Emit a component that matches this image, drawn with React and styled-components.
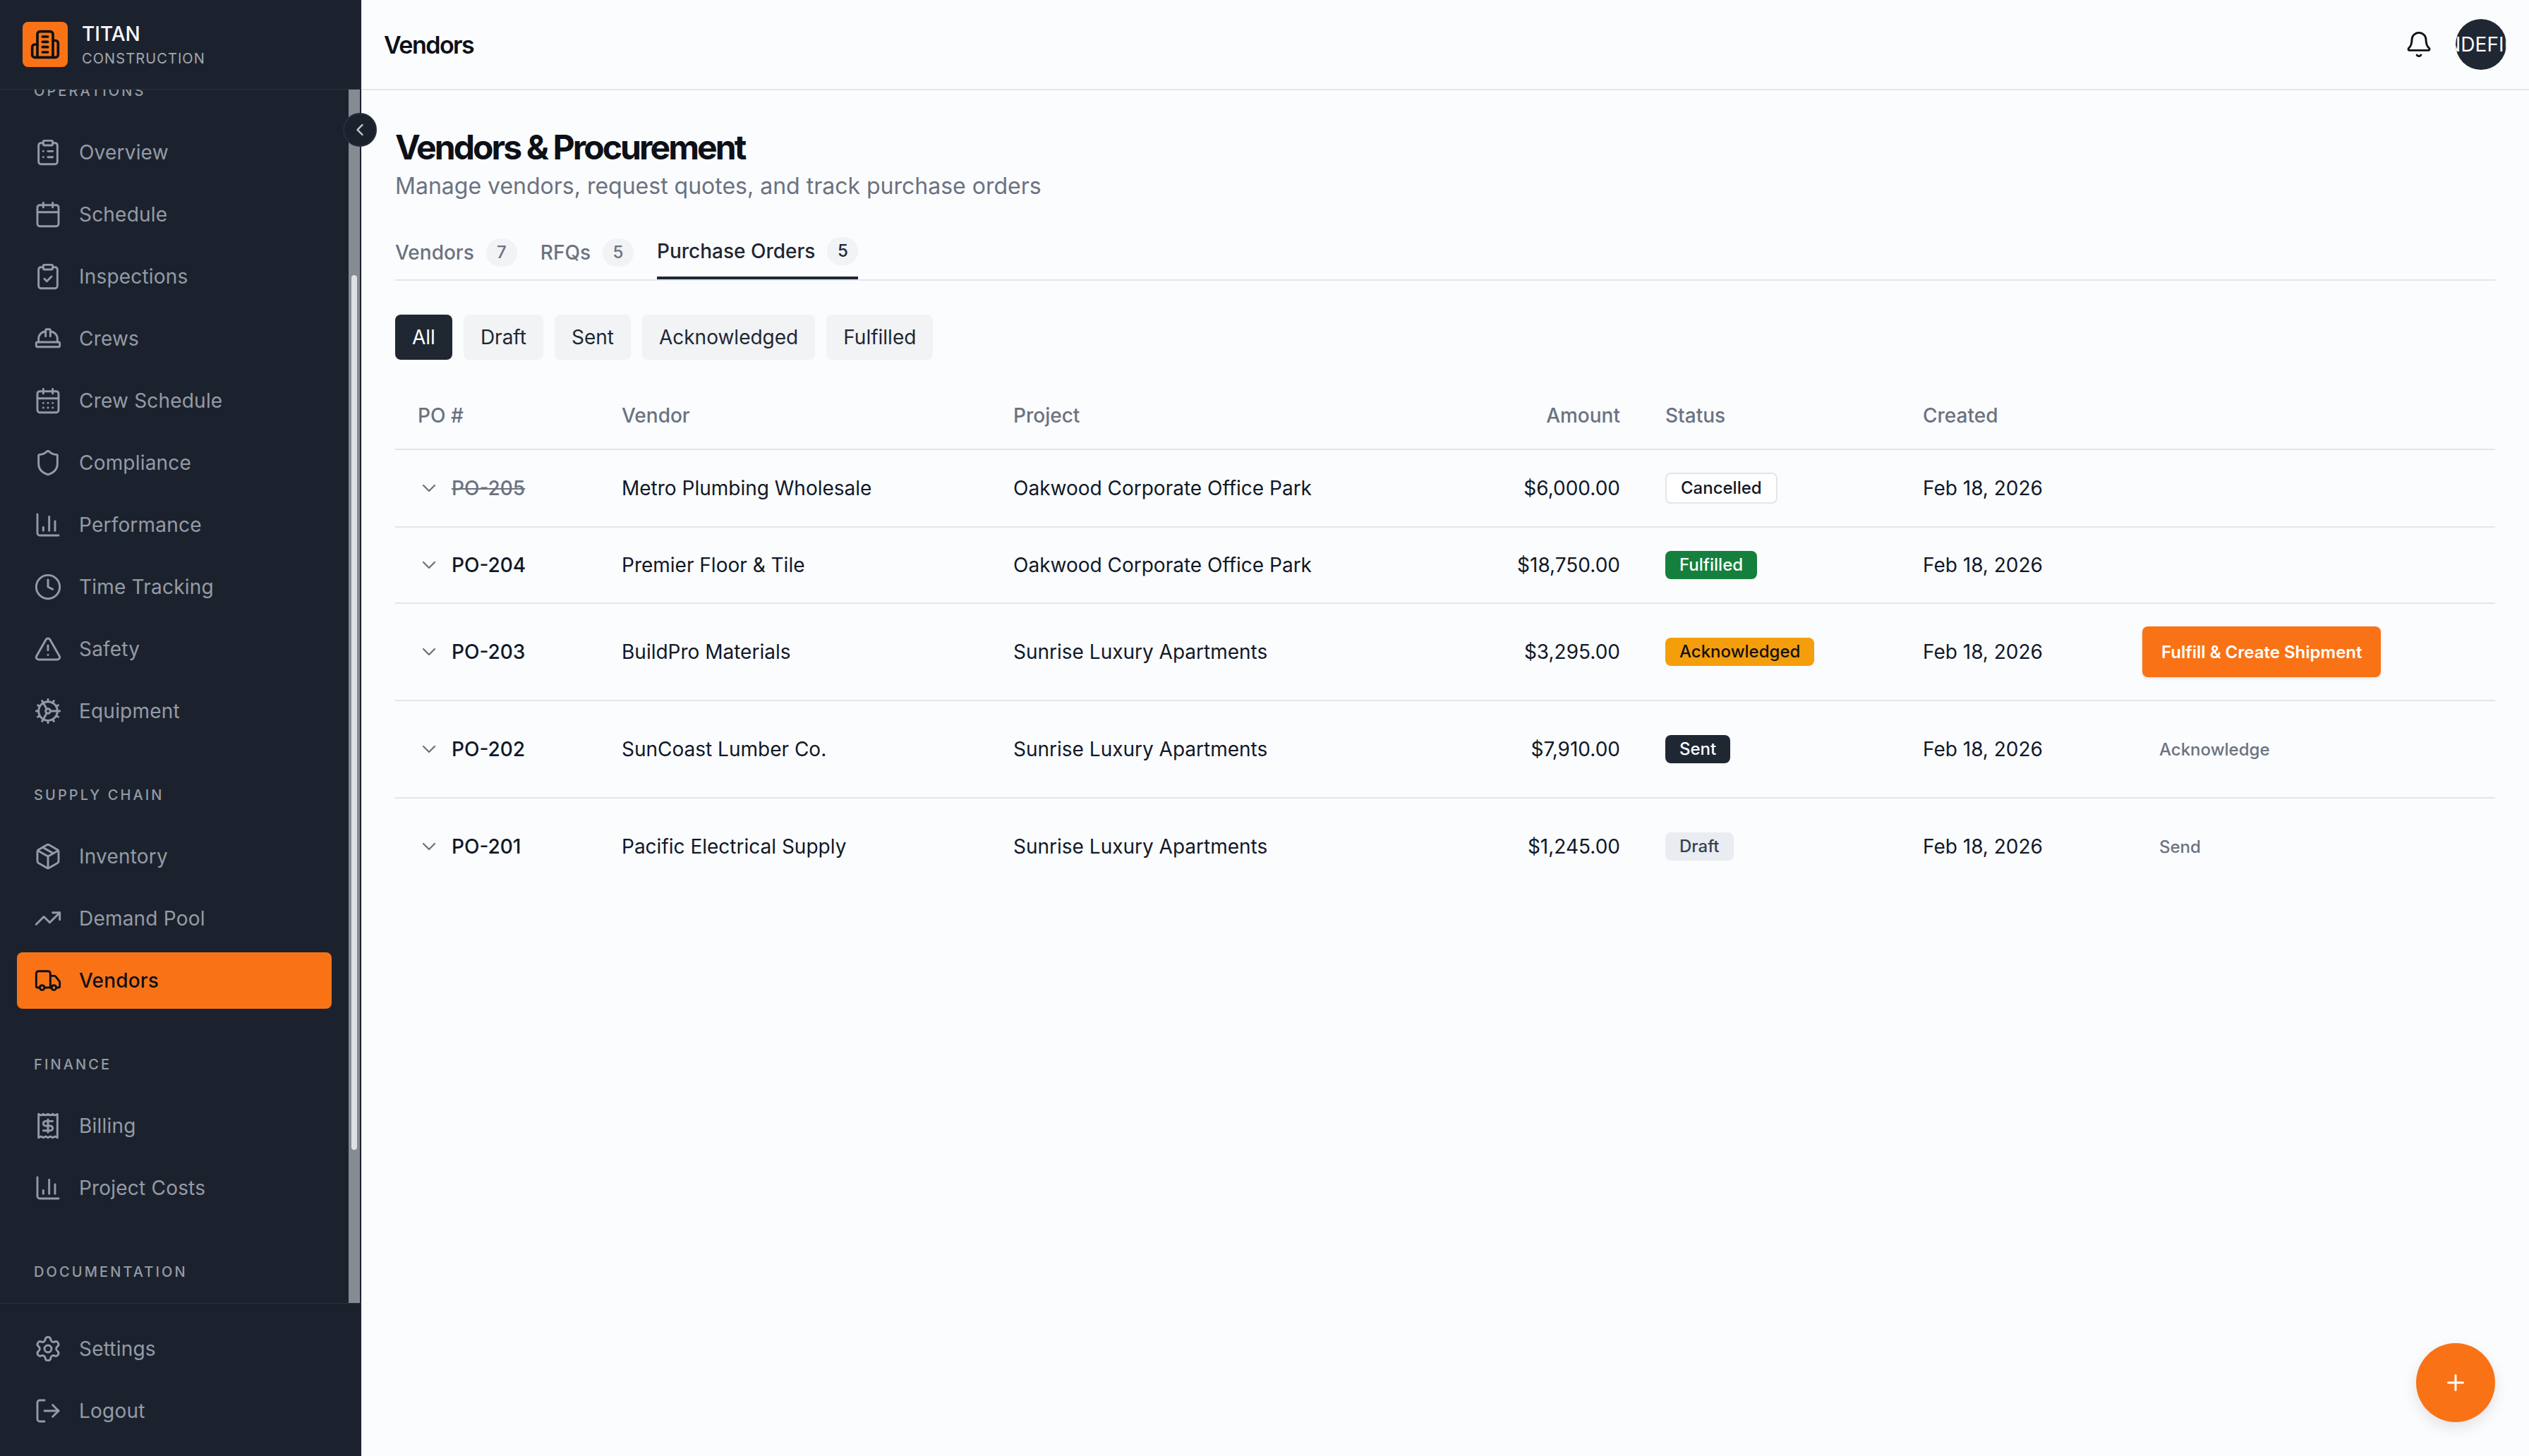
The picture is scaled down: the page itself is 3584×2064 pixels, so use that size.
import styled, { createGlobalStyle } from "styled-components";
import {
  Bell, Calendar, CalendarDays, ChartColumn, ChevronDown, ChevronLeft, ClipboardCheck, ClipboardList,
  Clock, Cog, HardHat, LogOut, Package, Plus, Receipt, Settings, Shield, TrendingUp, TriangleAlert, Truck,
} from "lucide-react";

const ORANGE = "#f97316";
const NAVY = "#1c222d";
const LINE = "#e2e6ea";

const NAV = [
  {
    title: "OPERATIONS",
    items: [
      ["Overview", ClipboardList], ["Schedule", Calendar], ["Inspections", ClipboardCheck], ["Crews", HardHat],
      ["Crew Schedule", CalendarDays], ["Compliance", Shield], ["Performance", ChartColumn],
      ["Time Tracking", Clock], ["Safety", TriangleAlert], ["Equipment", Cog],
    ],
  },
  { title: "SUPPLY CHAIN", items: [["Inventory", Package], ["Demand Pool", TrendingUp], ["Vendors", Truck]] },
  { title: "FINANCE", items: [["Billing", Receipt], ["Project Costs", ChartColumn]] },
  { title: "DOCUMENTATION", items: [] },
];

const TABS = [["Vendors", 7], ["RFQs", 5], ["Purchase Orders", 5]];
const FILTERS = ["All", "Draft", "Sent", "Acknowledged", "Fulfilled"];
const COLUMNS = [289, 555, 620, 304, 365, 311, 532];

const ORDERS = [
  { id: "PO-205", vendor: "Metro Plumbing Wholesale", project: "Oakwood Corporate Office Park", amount: "$6,000.00", status: "Cancelled" },
  { id: "PO-204", vendor: "Premier Floor & Tile", project: "Oakwood Corporate Office Park", amount: "$18,750.00", status: "Fulfilled" },
  { id: "PO-203", vendor: "BuildPro Materials", project: "Sunrise Luxury Apartments", amount: "$3,295.00", status: "Acknowledged", primary: "Fulfill & Create Shipment" },
  { id: "PO-202", vendor: "SunCoast Lumber Co.", project: "Sunrise Luxury Apartments", amount: "$7,910.00", status: "Sent", ghost: "Acknowledge" },
  { id: "PO-201", vendor: "Pacific Electrical Supply", project: "Sunrise Luxury Apartments", amount: "$1,245.00", status: "Draft", ghost: "Send" },
];

const BADGE = {
  Cancelled: "background:#fff;color:#111827;border:2px solid #e2e6ea;height:44px;",
  Fulfilled: "background:#15803d;color:#fff;",
  Acknowledged: "background:#f59e0b;color:#111;",
  Sent: "background:#1f2733;color:#fff;",
  Draft: "background:#e9ecf0;color:#374151;",
};

const Global = createGlobalStyle`
  html, body { margin: 0; padding: 0; height: 100%; }
  body {
    font-family: Inter, "Liberation Sans", sans-serif;
    background: #fafcfe;
    color: #111827;
    overflow: hidden;
  }
  button { font-family: inherit; }
`;

const Shell = styled.div`
  display: flex;
  height: 100vh;
`;

const Sidebar = styled.aside`
  position: relative;
  z-index: 2;
  flex: 0 0 512px;
  display: flex;
  flex-direction: column;
  background: ${NAVY};
`;

const Brand = styled.div`
  flex: 0 0 127px;
  box-sizing: border-box;
  display: flex;
  align-items: center;
  gap: 20px;
  padding-left: 32px;
  border-bottom: 1px solid #2c323d;
`;

const LogoBox = styled.div`
  width: 64px;
  height: 64px;
  border-radius: 8px;
  background: ${ORANGE};
  color: #0d1017;
  display: flex;
  align-items: center;
  justify-content: center;
`;

const BrandText = styled.div`
  display: flex;
  flex-direction: column;
  gap: 6px;
`;

const BrandName = styled.div`
  font-size: 28px;
  line-height: 34px;
  font-weight: 500;
  color: #f8fafc;
`;

const BrandSub = styled.div`
  font-size: 20px;
  line-height: 24px;
  letter-spacing: 1.1px;
  color: #a2a8b2;
`;

const NavScroll = styled.div`
  position: relative;
  flex: 1;
  min-height: 0;
  overflow: hidden;
`;

const NavInner = styled.nav`
  margin-top: -18px;
  padding: 0 42px 0 24px;
`;

const Section = styled.section`
  & + & { margin-top: 59px; }
`;

const SectionTitle = styled.div`
  height: 40px;
  line-height: 40px;
  margin-bottom: 27px;
  padding-left: 24px;
  font-size: 20px;
  font-weight: 500;
  letter-spacing: 3.1px;
  color: #949ba7;
`;

const NavList = styled.div`
  display: flex;
  flex-direction: column;
  gap: 8px;
`;

const NavItem = styled.a`
  display: flex;
  align-items: center;
  gap: 24px;
  height: 80px;
  width: 446px;
  box-sizing: border-box;
  padding-left: 24px;
  border-radius: 8px;
  font-size: 28px;
  letter-spacing: 0.2px;
  font-weight: ${(p) => (p.$active ? 500 : 400)};
  background: ${(p) => (p.$active ? ORANGE : "transparent")};
  color: ${(p) => (p.$active ? "#0d1017" : "#949ba7")};
`;

const Track = styled.div`
  position: absolute;
  top: 0;
  bottom: 0;
  left: 494px;
  width: 16px;
  background: #868b93;
`;

const Thumb = styled.div`
  position: absolute;
  top: 263px;
  left: 4px;
  width: 8px;
  height: 1240px;
  border-radius: 4px;
  background: #dde1e6;
`;

const Footer = styled.div`
  flex: 0 0 auto;
  display: flex;
  flex-direction: column;
  gap: 8px;
  padding: 24px;
  border-top: 1px solid #2c323d;
`;

const Collapse = styled.button`
  position: absolute;
  top: 160px;
  left: 486px;
  width: 48px;
  height: 48px;
  padding: 0;
  border-radius: 50%;
  border: 2px solid #262d39;
  background: ${NAVY};
  color: #c6cbd3;
  display: flex;
  align-items: center;
  justify-content: center;
`;

const Main = styled.main`
  flex: 1;
  min-width: 0;
  display: flex;
  flex-direction: column;
`;

const TopBar = styled.header`
  flex: 0 0 128px;
  box-sizing: border-box;
  display: flex;
  align-items: center;
  justify-content: space-between;
  padding: 0 32px;
  border-bottom: 2px solid ${LINE};
`;

const TopTitle = styled.div`
  font-size: 34px;
  font-weight: 600;
  letter-spacing: -1.5px;
  color: #0d1017;
`;

const TopRight = styled.div`
  display: flex;
  align-items: center;
  gap: 32px;
  color: #0d1017;
`;

const Avatar = styled.div`
  width: 72px;
  height: 72px;
  box-sizing: border-box;
  padding-left: 20px;
  border-radius: 50%;
  overflow: hidden;
  background: #1f2733;
  color: #fff;
  font-size: 28px;
  display: flex;
  align-items: center;
  justify-content: center;
  white-space: nowrap;
`;

const Content = styled.div`
  padding: 48px;
`;

const Title = styled.h1`
  margin: 0;
  padding-top: 2px;
  font-size: 48px;
  line-height: 62px;
  font-weight: 700;
  letter-spacing: -2.9px;
  color: #0d1017;
`;

const Subtitle = styled.p`
  margin: 0;
  font-size: 32px;
  line-height: 48px;
  color: #6b7280;
`;

const TabBar = styled.div`
  display: flex;
  align-items: flex-end;
  gap: 33px;
  margin-top: 48px;
  border-bottom: 2px solid ${LINE};
`;

const Tab = styled.div`
  display: flex;
  align-items: center;
  gap: 17px;
  padding-bottom: 16px;
  font-size: 28px;
  line-height: 40px;
  font-weight: 500;
  color: ${(p) => (p.$active ? "#1f2733" : "#6b7280")};
  border-bottom: ${(p) => (p.$active ? "4px solid #1f2733" : "2px solid transparent")};
`;

const Count = styled.span`
  width: 44px;
  height: 40px;
  border-radius: 20px;
  background: #f1f3f5;
  font-size: 24px;
  display: flex;
  align-items: center;
  justify-content: center;
`;

const Filters = styled.div`
  display: flex;
  gap: 16px;
  margin: 48px 0 32px;
`;

const Filter = styled.button`
  height: 64px;
  padding: 0 24px;
  border: 0;
  border-radius: 8px;
  font-size: 28px;
  font-weight: 400;
  background: ${(p) => (p.$active ? "#1f2733" : "#f1f3f5")};
  color: ${(p) => (p.$active ? "#fff" : "#1f2733")};
`;

const Table = styled.table`
  width: 100%;
  table-layout: fixed;
  border-collapse: collapse;
  font-size: 28px;
  line-height: 42px;
`;

const Th = styled.th`
  height: 94px;
  padding: 0 32px;
  text-align: ${(p) => (p.$right ? "right" : "left")};
  font-weight: 500;
  color: #6b7280;
  border-bottom: 2px solid ${LINE};
`;

const Tr = styled.tr`
  border-bottom: 2px solid ${LINE};
  &:last-child { border-bottom: 0; }
`;

const Td = styled.td`
  padding: 32px;
  text-align: ${(p) => (p.$right ? "right" : "left")};
  vertical-align: middle;
  white-space: nowrap;
`;

const PoCell = styled.div`
  display: flex;
  align-items: center;
  gap: 16px;
  font-weight: 500;
  color: ${(p) => (p.$cancelled ? "#6b7280" : "#111827")};
  text-decoration: ${(p) => (p.$cancelled ? "line-through" : "none")};
  svg { color: #6b7280; flex: none; }
`;

const Badge = styled.span`
  display: flex;
  width: fit-content;
  align-items: center;
  box-sizing: border-box;
  height: 40px;
  padding: 0 20px;
  border-radius: 8px;
  font-size: 24px;
  font-weight: 500;
  line-height: 32px;
  ${(p) => BADGE[p.$status]}
`;

const ActionButton = styled.button`
  display: block;
  height: 72px;
  padding: 0 ${(p) => (p.$primary ? "27px" : "24px")};
  border: 0;
  border-radius: 8px;
  font-size: 24px;
  font-weight: ${(p) => (p.$primary ? 600 : 500)};
  background: ${(p) => (p.$primary ? ORANGE : "transparent")};
  color: ${(p) => (p.$primary ? "#fff" : "#6b7280")};
  box-shadow: ${(p) => (p.$primary ? "0 2px 4px rgba(0,0,0,.1)" : "none")};
`;

const Fab = styled.button`
  position: fixed;
  right: 48px;
  bottom: 48px;
  width: 112px;
  height: 112px;
  padding: 0;
  border: 0;
  border-radius: 50%;
  background: ${ORANGE};
  color: #fff;
  display: flex;
  align-items: center;
  justify-content: center;
  box-shadow: 0 8px 20px rgba(0, 0, 0, 0.1);
`;

// older lucide Building2, the installed one has a door instead of four floors
const Logo = () => (
  <svg width="44" height="44" viewBox="0 0 24 24" fill="none" stroke="currentColor" strokeWidth="2" strokeLinecap="round" strokeLinejoin="round">
    <path d="M6 22V4a2 2 0 0 1 2-2h8a2 2 0 0 1 2 2v18Z" />
    <path d="M6 12H4a2 2 0 0 0-2 2v6a2 2 0 0 0 2 2h2" />
    <path d="M18 9h2a2 2 0 0 1 2 2v9a2 2 0 0 1-2 2h-2" />
    <path d="M10 6h4" />
    <path d="M10 10h4" />
    <path d="M10 14h4" />
    <path d="M10 18h4" />
  </svg>
);

const Item = ({ label, icon: Icon, active }) => (
  <NavItem $active={active}>
    <Icon size={40} strokeWidth={1.75} />
    {label}
  </NavItem>
);

const App = () => {
  return (
    <Shell>
      <Global />
      <Sidebar>
        <Brand>
          <LogoBox><Logo /></LogoBox>
          <BrandText>
            <BrandName>TITAN</BrandName>
            <BrandSub>CONSTRUCTION</BrandSub>
          </BrandText>
        </Brand>
        <NavScroll>
          <NavInner>
            {NAV.map((s) => (
              <Section key={s.title}>
                <SectionTitle>{s.title}</SectionTitle>
                <NavList>
                  {s.items.map(([label, icon]) => (
                    <Item key={label} label={label} icon={icon} active={label === "Vendors"} />
                  ))}
                </NavList>
              </Section>
            ))}
          </NavInner>
          <Track><Thumb /></Track>
        </NavScroll>
        <Footer>
          <Item label="Settings" icon={Settings} />
          <Item label="Logout" icon={LogOut} />
        </Footer>
        <Collapse><ChevronLeft size={28} strokeWidth={2} /></Collapse>
      </Sidebar>

      <Main>
        <TopBar>
          <TopTitle>Vendors</TopTitle>
          <TopRight>
            <Bell size={40} strokeWidth={1.75} />
            <Avatar>UNDEFINED</Avatar>
          </TopRight>
        </TopBar>
        <Content>
          <Title>Vendors &amp; Procurement</Title>
          <Subtitle>Manage vendors, request quotes, and track purchase orders</Subtitle>
          <TabBar>
            {TABS.map(([label, n]) => (
              <Tab key={label} $active={label === "Purchase Orders"}>
                {label}
                <Count>{n}</Count>
              </Tab>
            ))}
          </TabBar>
          <Filters>
            {FILTERS.map((f) => (
              <Filter key={f} $active={f === "All"}>{f}</Filter>
            ))}
          </Filters>
          <Table>
            <colgroup>
              {COLUMNS.map((w, i) => <col key={i} width={w} />)}
            </colgroup>
            <thead>
              <tr>
                <Th>PO #</Th>
                <Th>Vendor</Th>
                <Th>Project</Th>
                <Th $right>Amount</Th>
                <Th>Status</Th>
                <Th>Created</Th>
                <Th />
              </tr>
            </thead>
            <tbody>
              {ORDERS.map((o) => (
                <Tr key={o.id}>
                  <Td>
                    <PoCell $cancelled={o.status === "Cancelled"}>
                      <ChevronDown size={32} strokeWidth={1.75} />
                      {o.id}
                    </PoCell>
                  </Td>
                  <Td>{o.vendor}</Td>
                  <Td>{o.project}</Td>
                  <Td $right>{o.amount}</Td>
                  <Td><Badge $status={o.status}>{o.status}</Badge></Td>
                  <Td>Feb 18, 2026</Td>
                  <Td>
                    {o.primary && <ActionButton $primary>{o.primary}</ActionButton>}
                    {o.ghost && <ActionButton>{o.ghost}</ActionButton>}
                  </Td>
                </Tr>
              ))}
            </tbody>
          </Table>
        </Content>
      </Main>
      <Fab><Plus size={36} strokeWidth={2} /></Fab>
    </Shell>
  );
};

export default App;
